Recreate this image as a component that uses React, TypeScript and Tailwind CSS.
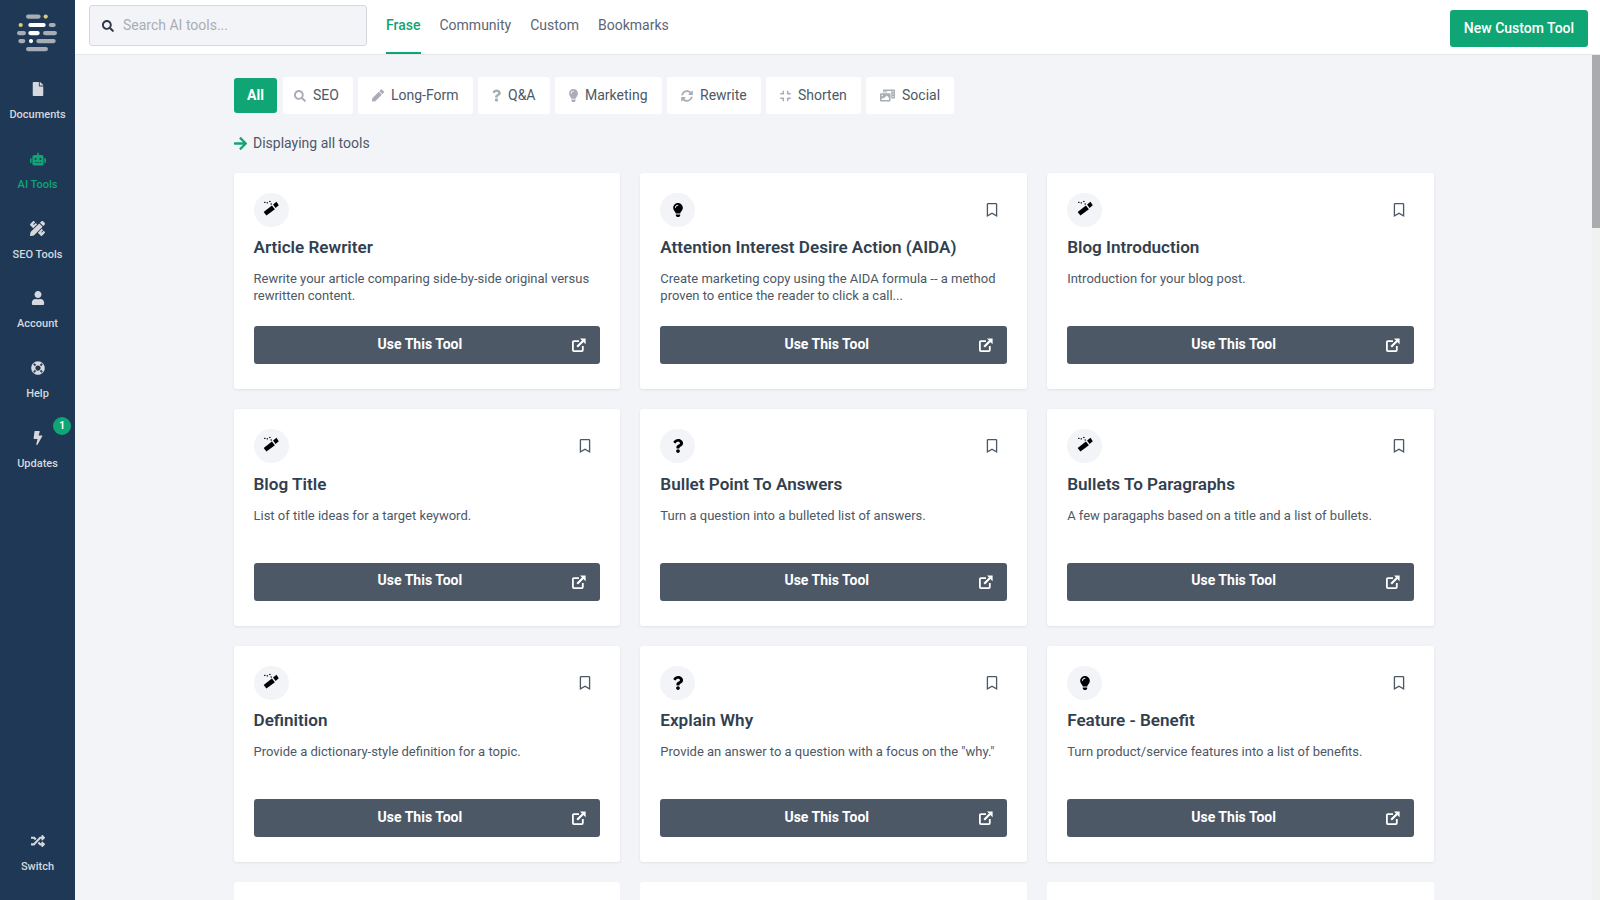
import React from "react";
import {
  FaArrowRight,
  FaBolt,
  FaCompress,
  FaFile,
  FaLifeRing,
  FaLightbulb,
  FaPen,
  FaPencilRuler,
  FaPhotoVideo,
  FaQuestion,
  FaRandom,
  FaRegBookmark,
  FaRobot,
  FaSearch,
  FaSyncAlt,
  FaUser,
} from "react-icons/fa";

type Tool = {
  title: string;
  description: string;
  icon: React.ReactNode;
  bookmark: boolean;
};

// single diagonal wand, the icon package's magic icon has a different shape
const Wand = () => (
  <svg width="16" height="16" viewBox="0 0 14 14" className="mb-[4px] block">
    <path d="M0.6 10.6 L7.8 4.8 L10.4 8 L3 13.6 Z" fill="#000" />
    <path d="M8.8 4 L11.8 1.6 L13.8 4.6 L11 7 Z" fill="#000" />
    <g fill="#000">
      <rect x="1" y="1.6" width="1.2" height="1" />
      <rect x="3.2" y="2" width="1.2" height="1" />
      <rect x="5.4" y="0.8" width="1.2" height="1" />
      <rect x="6.6" y="3" width="1.2" height="1" />
    </g>
  </svg>
);

const LinkOut = () => (
  <svg width="14" height="14" viewBox="0 0 14 14" className="block shrink-0">
    <path d="M7 3.2H1.9a1 1 0 0 0-1 1v7.9a1 1 0 0 0 1 1h7.9a1 1 0 0 0 1-1V8" stroke="#fff" strokeWidth="1.8" fill="none" />
    <path d="M5.2 8.8 L11 3" stroke="#fff" strokeWidth="2.2" />
    <path d="M8 .6h5.6v5.6z" fill="#fff" />
  </svg>
);

const magic = <Wand />;
const bulb = <FaLightbulb size={14} />;
const question = <FaQuestion size={14} />;

const tools: Tool[] = [
  {
    title: "Article Rewriter",
    description: "Rewrite your article comparing side-by-side original versus rewritten content.",
    icon: magic,
    bookmark: false,
  },
  {
    title: "Attention Interest Desire Action (AIDA)",
    description: "Create marketing copy using the AIDA formula -- a method proven to entice the reader to click a call...",
    icon: bulb,
    bookmark: true,
  },
  { title: "Blog Introduction", description: "Introduction for your blog post.", icon: magic, bookmark: true },
  { title: "Blog Title", description: "List of title ideas for a target keyword.", icon: magic, bookmark: true },
  {
    title: "Bullet Point To Answers",
    description: "Turn a question into a bulleted list of answers.",
    icon: question,
    bookmark: true,
  },
  {
    title: "Bullets To Paragraphs",
    description: "A few paragaphs based on a title and a list of bullets.",
    icon: magic,
    bookmark: true,
  },
  { title: "Definition", description: "Provide a dictionary-style definition for a topic.", icon: magic, bookmark: true },
  {
    title: "Explain Why",
    description: 'Provide an answer to a question with a focus on the "why."',
    icon: question,
    bookmark: true,
  },
  {
    title: "Feature - Benefit",
    description: "Turn product/service features into a list of benefits.",
    icon: bulb,
    bookmark: true,
  },
];

const filters = [
  { label: "SEO", icon: <FaSearch size={12} />, cls: "w-[70px] pl-[10px]", box: "w-[13px]" },
  { label: "Long-Form", icon: <FaPen size={13} />, cls: "w-[115px] pl-[14px]", box: "w-[12px]" },
  { label: "Q&A", icon: <FaQuestion size={13} />, cls: "w-[72px] pl-[14px]", box: "w-[9px]" },
  { label: "Marketing", icon: <FaLightbulb size={13} />, cls: "w-[107px] pl-[14px]", box: "w-[9px]" },
  { label: "Rewrite", icon: <FaSyncAlt size={12} />, cls: "w-[94px] pl-[14px]", box: "w-[12px]" },
  { label: "Shorten", icon: <FaCompress size={12} />, cls: "w-[95px] pl-[14px]", box: "w-[11px]" },
  { label: "Social", icon: <FaPhotoVideo size={15} />, cls: "w-[88px] pl-[14px]", box: "w-[15px]" },
];

const navItems = [
  { label: "Documents", icon: <FaFile size={14} /> },
  { label: "AI Tools", icon: <FaRobot size={16} />, active: true },
  { label: "SEO Tools", icon: <FaPencilRuler size={15} /> },
  { label: "Account", icon: <FaUser size={14} /> },
  { label: "Help", icon: <FaLifeRing size={14} /> },
  { label: "Updates", icon: <FaBolt size={14} />, badge: "1" },
];

const Logo = () => (
  <svg width="75" height="54" viewBox="0 0 75 54" className="block">
    <g fill="#a8adb5">
      <rect x="26" y="14.5" width="14.6" height="4.2" rx="2.1" />
      <rect x="48.7" y="22.9" width="7" height="4.2" rx="2.1" />
      <rect x="17" y="31" width="9" height="4.2" rx="2.1" />
      <rect x="43" y="31" width="14" height="4.2" rx="2.1" />
      <rect x="18.3" y="39" width="7" height="4.2" rx="2.1" />
      <rect x="36.3" y="39" width="19.4" height="4.2" rx="2.1" />
      <rect x="26" y="47" width="22" height="4.2" rx="2.1" />
    </g>
    <g fill="#e3c86f">
      <circle cx="45.7" cy="16.6" r="2.1" />
      <circle cx="20.7" cy="25" r="2.1" />
    </g>
    <g fill="#ffffff">
      <rect x="28.3" y="22.9" width="17.4" height="4.2" rx="2.1" />
      <rect x="28.3" y="31" width="11.4" height="4.2" rx="2.1" />
      <circle cx="31" cy="41.1" r="2.1" />
    </g>
  </svg>
);

const NavItem = ({ label, icon, active, badge }: { label: string; icon: React.ReactNode; active?: boolean; badge?: string }) => (
  <div className={`relative flex h-[69.75px] flex-col items-center ${active ? "text-[#10a574]" : "text-[#d5d8dd]"}`}>
    <div className="flex h-[20px] items-center">{icon}</div>
    <div className="mt-[9px] text-[11px] leading-[14px] font-medium">{label}</div>
    {badge && (
      <div className="absolute top-[-11px] right-[4px] flex h-[18px] w-[18px] items-center justify-center rounded-full bg-[#10a574] text-[10px] font-bold text-white">
        {badge}
      </div>
    )}
  </div>
);

const ToolCard = ({ tool }: { tool: Tool }) => (
  <div className="flex h-[216.5px] flex-col rounded-[3px] bg-white px-[20px] pt-[20px] shadow-[0_1px_3px_rgba(0,0,0,0.08)]">
    <div className="flex h-[34px] items-center justify-between pr-[8px]">
      <div className="flex h-[34px] w-[35px] items-center justify-center rounded-full bg-[#f3f4f8] text-black">{tool.icon}</div>
      {tool.bookmark && <FaRegBookmark size={14} className="text-[#4d5866]" />}
    </div>
    <h3 className="mt-[8.5px] text-[17.1px] leading-[24px] font-semibold text-[#323f50]">{tool.title}</h3>
    <p className="mt-[11px] h-[34px] text-[13px] leading-[17px] text-[#4d5866]">{tool.description}</p>
    <button className="mt-[22px] flex h-[38px] items-center rounded-[3px] bg-[#4d5866] px-[14px] text-white">
      <span className="mb-[2px] flex-1 text-center text-[14px] font-bold">Use This Tool</span>
      <LinkOut />
    </button>
  </div>
);

export default function App() {
  return (
    <div className="flex h-[900px] w-[1600px] overflow-hidden bg-[#f3f4f8] font-['Roboto',sans-serif]">
      <aside className="flex h-full w-[75px] shrink-0 flex-col bg-[#1e3856]">
        <Logo />
        <div className="mt-[25px]">
          {navItems.map((n) => (
            <NavItem key={n.label} {...n} />
          ))}
        </div>
        <div className="mt-auto h-[68.75px]">
          <NavItem label="Switch" icon={<FaRandom size={14} />} />
        </div>
      </aside>

      <div className="flex min-w-0 flex-1 flex-col">
        <header className="flex h-[55px] shrink-0 items-start border-b border-[#e5e7eb] bg-white">
          <div className="mt-[5px] ml-[14px] flex h-[41px] w-[278px] items-center rounded-[3px] border border-[#d5d8de] bg-[#f3f4f8] pl-[12px]">
            <FaSearch size={12} className="text-[#2d3748]" />
            <span className="ml-[9px] text-[14px] text-[#a9adb5]">Search AI tools...</span>
          </div>
          <nav className="ml-[19px] flex h-[54px] gap-[19px] text-[14px] text-[#5b6675]">
            <div className="flex h-full items-start border-b-2 border-[#10a574] pt-[15px] font-medium text-[#10a574]">Frase</div>
            <div className="pt-[15px]">Community</div>
            <div className="pt-[15px]">Custom</div>
            <div className="pt-[15px]">Bookmarks</div>
          </nav>
          <button className="mt-[10px] mr-[12px] ml-auto flex h-[37px] w-[138px] items-center justify-center rounded-[3px] bg-[#10a574] text-[14px] font-medium text-white">
            New Custom Tool
          </button>
        </header>

        <div className="flex min-h-0 flex-1">
          <main className="min-w-0 flex-1 overflow-hidden">
            <div className="ml-[159px] w-[1200px] pt-[22px]">
              <div className="flex items-center gap-[5px]">
                <div className="mr-[1px] flex h-[35px] w-[43px] items-center justify-center rounded-[3px] bg-[#10a574] text-[14px] font-bold text-white">All</div>
                {filters.map((f) => (
                  <div
                    key={f.label}
                    className={`flex h-[37px] items-center gap-[7px] rounded-[3px] bg-white text-[14px] text-[#4d5866] ${f.cls}`}
                  >
                    <span className={`flex justify-center text-[#a9adb5] ${f.box}`}>{f.icon}</span>
                    {f.label}
                  </div>
                ))}
              </div>
              <div className="mt-[19px] flex h-[20px] items-center text-[14px] text-[#4d5866]">
                <FaArrowRight size={15} className="-ml-[1px] text-[#10a574]" />
                <span className="ml-[5px]">Displaying all tools</span>
              </div>
              <div className="mt-[19.5px] -ml-[0.5px] grid grid-cols-3 gap-[20px]">
                {tools.map((t) => (
                  <ToolCard key={t.title} tool={t} />
                ))}
                <div className="h-[216.5px] rounded-[3px] bg-white" />
                <div className="h-[216.5px] rounded-[3px] bg-white" />
                <div className="h-[216.5px] rounded-[3px] bg-white" />
              </div>
            </div>
          </main>
          <div className="w-[8px] shrink-0 bg-[#f1f1f1]">
            <div className="h-[173px] bg-[#a9abae]" />
          </div>
        </div>
      </div>
    </div>
  );
}
